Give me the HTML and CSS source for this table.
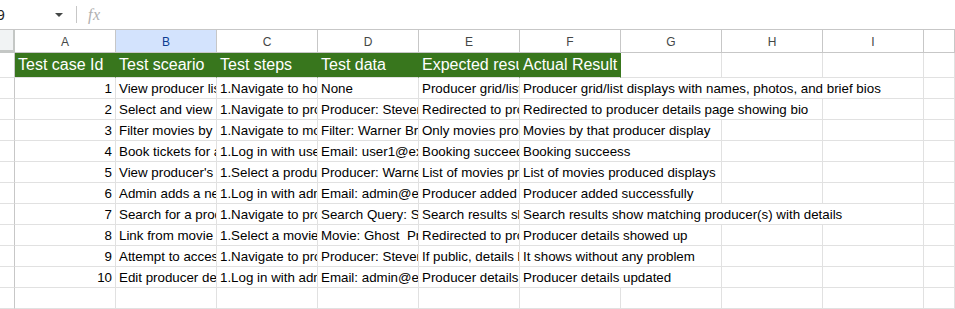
FILE: index.html
```html
<!DOCTYPE html>
<html>
<head>
<meta charset="utf-8">
<link rel="stylesheet" href="styles.css">
</head>
<body>
<div class="formula-bar">
  <div class="name-box"><span class="name-text">9</span><span class="caret"></span></div>
  <div class="divider"></div>
  <div class="fx">fx</div>
</div>
<div class="sheet">
  <div class="row col-head">
    <div class="corner"></div>
    <div class="ch">A</div><div class="ch sel">B</div><div class="ch">C</div><div class="ch">D</div><div class="ch">E</div><div class="ch">F</div><div class="ch">G</div><div class="ch">H</div><div class="ch">I</div><div class="ch"></div>
  </div>
  <div class="row title-row">
    <div class="rh"></div>
    <div class="c head">Test case Id</div>
    <div class="c head">Test sceario</div>
    <div class="c head">Test steps</div>
    <div class="c head">Test data</div>
    <div class="c head">Expected result</div>
    <div class="c head">Actual Result</div>
    <div class="c"></div><div class="c"></div><div class="c"></div><div class="c"></div>
  </div>
  <div class="row">
    <div class="rh"></div>
    <div class="c num">1</div>
    <div class="c">View producer list</div>
    <div class="c">1.Navigate to home page</div>
    <div class="c">None</div>
    <div class="c">Producer grid/list displays</div>
    <div class="c span4">Producer grid/list displays with names, photos, and brief bios</div>
    <div class="c"></div>
  </div>
  <div class="row">
    <div class="rh"></div>
    <div class="c num">2</div>
    <div class="c">Select and view producer</div>
    <div class="c">1.Navigate to producers</div>
    <div class="c">Producer: Steven Spielberg</div>
    <div class="c">Redirected to producer page</div>
    <div class="c span3">Redirected to producer details page showing bio</div>
    <div class="c"></div><div class="c"></div>
  </div>
  <div class="row">
    <div class="rh"></div>
    <div class="c num">3</div>
    <div class="c">Filter movies by producer</div>
    <div class="c">1.Navigate to movies</div>
    <div class="c">Filter: Warner Bros</div>
    <div class="c">Only movies produced</div>
    <div class="c span2">Movies by that producer display</div>
    <div class="c"></div><div class="c"></div><div class="c"></div>
  </div>
  <div class="row">
    <div class="rh"></div>
    <div class="c num">4</div>
    <div class="c">Book tickets for a movie</div>
    <div class="c">1.Log in with user</div>
    <div class="c">Email: user1@example.com</div>
    <div class="c">Booking succeeds</div>
    <div class="c span2">Booking succeess</div>
    <div class="c"></div><div class="c"></div><div class="c"></div>
  </div>
  <div class="row">
    <div class="rh"></div>
    <div class="c num">5</div>
    <div class="c">View producer's movies</div>
    <div class="c">1.Select a producer</div>
    <div class="c">Producer: Warner Bros</div>
    <div class="c">List of movies produced</div>
    <div class="c span2">List of movies produced displays</div>
    <div class="c"></div><div class="c"></div><div class="c"></div>
  </div>
  <div class="row">
    <div class="rh"></div>
    <div class="c num">6</div>
    <div class="c">Admin adds a new producer</div>
    <div class="c">1.Log in with admin</div>
    <div class="c">Email: admin@example.com</div>
    <div class="c">Producer added successfully</div>
    <div class="c span2">Producer added successfully</div>
    <div class="c"></div><div class="c"></div><div class="c"></div>
  </div>
  <div class="row">
    <div class="rh"></div>
    <div class="c num">7</div>
    <div class="c">Search for a producer</div>
    <div class="c">1.Navigate to producers</div>
    <div class="c">Search Query: Spielberg</div>
    <div class="c">Search results show</div>
    <div class="c span4">Search results show matching producer(s) with details</div>
    <div class="c"></div>
  </div>
  <div class="row">
    <div class="rh"></div>
    <div class="c num">8</div>
    <div class="c">Link from movie to producer</div>
    <div class="c">1.Select a movie</div>
    <div class="c">Movie: Ghost&nbsp;&nbsp;Producer</div>
    <div class="c">Redirected to producer</div>
    <div class="c span2">Producer details showed up</div>
    <div class="c"></div><div class="c"></div><div class="c"></div>
  </div>
  <div class="row">
    <div class="rh"></div>
    <div class="c num">9</div>
    <div class="c">Attempt to access</div>
    <div class="c">1.Navigate to producer</div>
    <div class="c">Producer: Steven</div>
    <div class="c">If public, details load</div>
    <div class="c span2">It shows without any problem</div>
    <div class="c"></div><div class="c"></div><div class="c"></div>
  </div>
  <div class="row">
    <div class="rh"></div>
    <div class="c num">10</div>
    <div class="c">Edit producer details</div>
    <div class="c">1.Log in with admin</div>
    <div class="c">Email: admin@example.com</div>
    <div class="c">Producer details updated</div>
    <div class="c span2">Producer details updated</div>
    <div class="c"></div><div class="c"></div><div class="c"></div>
  </div>
  <div class="row">
    <div class="rh"></div>
    <div class="c"></div><div class="c"></div><div class="c"></div><div class="c"></div><div class="c"></div><div class="c"></div><div class="c"></div><div class="c"></div><div class="c"></div><div class="c"></div>
  </div>
</div>
</body>
</html>
```
FILE: styles.css
```css
html, body {
  margin: 0;
  padding: 0;
  background: #ffffff;
  font-family: "Liberation Sans", Arial, sans-serif;
  overflow: hidden;
}

.formula-bar {
  display: flex;
  align-items: center;
  height: 29px;
  border-bottom: 1px solid #c7c7c7;
  box-sizing: content-box;
}

.name-box {
  display: flex;
  align-items: center;
  width: 76px;
  height: 29px;
}

.name-text {
  font-size: 14px;
  color: #1f1f1f;
  margin-left: -3px;
  width: 58px;
}

.caret {
  width: 0;
  height: 0;
  border-left: 4px solid transparent;
  border-right: 4px solid transparent;
  border-top: 4px solid #444746;
  margin-top: 1px;
}

.divider {
  width: 1px;
  height: 17px;
  background: #c7c7c7;
}

.fx {
  margin-left: 11px;
  font-family: "Liberation Serif", "Times New Roman", serif;
  font-style: italic;
  font-size: 16px;
  color: #b0b0b0;
  letter-spacing: 0.5px;
}

.row {
  display: grid;
  grid-template-columns: 15px repeat(9, 101px) 1fr;
  height: 21px;
}

.row > div {
  box-sizing: border-box;
  border-right: 1px solid #e1e1e1;
  border-bottom: 1px solid #e1e1e1;
  overflow: hidden;
  white-space: nowrap;
}

.col-head {
  height: 23px;
}

.row > .corner {
  background: #f1f3f4;
  border-right: 2px solid #c4c7c5;
  border-bottom: 3px solid #c4c7c5;
}

.row > .ch {
  border-right: 1px solid #c7c7c7;
  border-bottom: 1px solid #c7c7c7;
  display: flex;
  align-items: center;
  justify-content: center;
  font-size: 12px;
  color: #444746;
  padding-top: 1px;
}

.row > .ch.sel {
  background: #d3e3fd;
  color: #0b3d91;
}

.row > .rh {
  border-right: 1px solid #c7c7c7;
  border-bottom: 1px solid #e1e1e1;
}

.c {
  display: flex;
  align-items: flex-end;
  padding: 0 1px 2px 3px;
  font-size: 13.33px;
  line-height: 15px;
  color: #000000;
}

.c.num {
  justify-content: flex-end;
  padding-right: 3px;
}

.title-row {
  height: 25px;
}

.row > .c.head {
  background: #38761d;
  color: #ffffff;
  font-size: 16px;
  line-height: 18px;
  padding-bottom: 3px;
  border-right-color: #38761d;
}

.span2 {
  grid-column: span 2;
}

.span3 {
  grid-column: span 3;
}

.span4 {
  grid-column: span 4;
}
```
